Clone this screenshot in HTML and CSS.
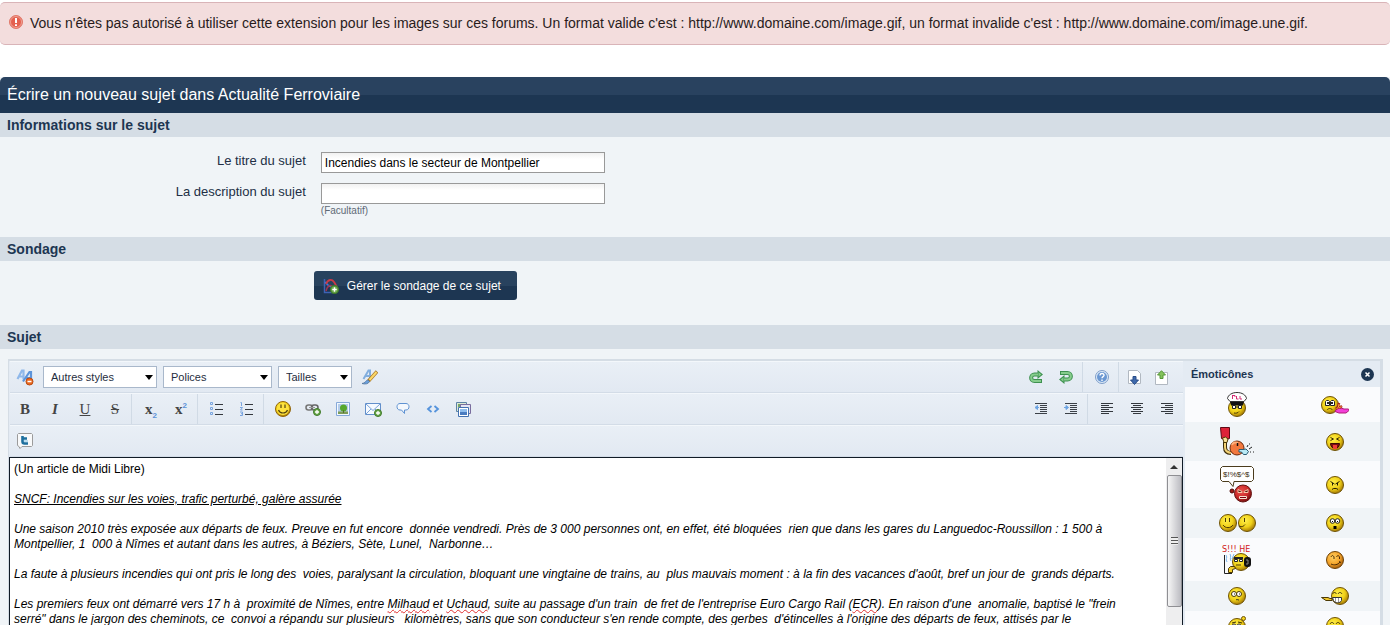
FILE: index.html
```html
<!DOCTYPE html>
<html lang="fr">
<head>
  <meta charset="utf-8">
  <title>Écrire un nouveau sujet dans Actualité Ferroviaire</title>
  <meta name="viewport" content="width=device-width, initial-scale=1">
  <link rel="stylesheet" href="styles.css">
</head>
<body>
  <!-- Shared shapes for icons and emoticons -->
  <svg class="defs" aria-hidden="true">
    <defs>
      <radialGradient id="gold" cx="40%" cy="35%" r="65%">
        <stop offset="0" stop-color="#fff04a"/>
        <stop offset=".6" stop-color="#f0d018"/>
        <stop offset="1" stop-color="#a87d05"/>
      </radialGradient>
      <radialGradient id="orange" cx="40%" cy="35%" r="65%">
        <stop offset="0" stop-color="#ffd060"/>
        <stop offset=".6" stop-color="#f5a52c"/>
        <stop offset="1" stop-color="#a85f0a"/>
      </radialGradient>
      <radialGradient id="red" cx="40%" cy="35%" r="65%">
        <stop offset="0" stop-color="#e8534d"/>
        <stop offset=".6" stop-color="#cf2c2c"/>
        <stop offset="1" stop-color="#7a1010"/>
      </radialGradient>
      <symbol id="face" viewBox="0 0 18 18">
        <circle cx="9" cy="9" r="8.5" fill="url(#gold)" stroke="#6e5206"/>
      </symbol>
      <symbol id="plus" viewBox="0 0 8 8">
        <circle cx="4" cy="4" r="3.5" fill="#6aa84b" stroke="#3f7a2a"/>
        <path d="M4 2v4M2 4h4" stroke="#fff" stroke-width="1.3"/>
      </symbol>
      <symbol id="turn" viewBox="0 0 14 14">
        <path d="M9 4.500H5.500C1 4.500 1 11 5.500 11H13" fill="none" stroke="#3e9150" stroke-width="4"/>
        <path d="M8.500 0L14 4.500 8.500 9z" fill="#3e9150"/>
        <path d="M9 4.500H5.500C1 4.500 1 11 5.500 11H12" fill="none" stroke="#86cc8c" stroke-width="2"/>
        <path d="M9.500 2.200l2.800 2.300-2.800 2.300z" fill="#86cc8c"/>
      </symbol>
    </defs>
  </svg>

  <div class="message">
    <svg width="14" height="14" viewBox="0 0 14 14" aria-hidden="true">
      <circle cx="7" cy="7" r="6.500" fill="#e4604f" stroke="#e07a6c"/>
      <circle cx="7" cy="7" r="5.500" fill="none" stroke="#f3b0a4" stroke-width=".8"/>
      <path d="M7 3v5M7 9.200v1.800" stroke="#fff" stroke-width="2"/>
    </svg>
    <p>Vous n'êtes pas autorisé à utiliser cette extension pour les images sur ces forums. Un format valide c'est : http://www.domaine.com/image.gif, un format invalide c'est : http://www.domaine.com/image.une.gif.</p>
  </div>

  <form class="post">
    <h1>Écrire un nouveau sujet dans Actualité Ferroviaire</h1>

    <h2>Informations sur le sujet</h2>
    <div class="fields">
      <label for="title">Le titre du sujet</label>
      <input type="text" id="title" value="Incendies dans le secteur de Montpellier">
      <label for="desc">La description du sujet</label>
      <div class="field">
        <input type="text" id="desc">
        <span class="hint">(Facultatif)</span>
      </div>
    </div>

    <h2>Sondage</h2>
    <div class="poll">
      <button type="button" class="poll-btn">
        <svg width="16" height="16" viewBox="0 0 16 16" fill="none" aria-hidden="true">
          <path d="M1.500 1v13.500H11" stroke="#3f62b4" stroke-width="1.500"/>
          <path d="M2 4l4 4 3 1" stroke="#3c78e0" stroke-width="1.500"/>
          <path d="M3 6c2-5 6-5 8-2s2 4 3 5" stroke="#c93a48" stroke-width="1.800"/>
          <path d="M3 13c1-5 4-7 7-4" stroke="#a03450" stroke-width="1.500"/>
          <use href="#plus" x="7" y="7" width="9" height="9"/>
        </svg>
        Gérer le sondage de ce sujet
      </button>
    </div>

    <h2>Sujet</h2>
    <div class="editor">
      <div class="main">
        <div class="toolbar">
          <div class="tools">
            <button type="button" class="tool" aria-label="Supprimer la mise en forme">
              <svg width="18" height="18" viewBox="0 0 18 18" fill="none" aria-hidden="true">
                <path d="M1.500 11L6 2.500h1.500v9M3.500 8.500h4" stroke="#8fb8ea" stroke-width="2.200"/>
                <path d="M7 13.500L13.500 4H15v9M9.500 10h5" stroke="#5c94da" stroke-width="2.200"/>
                <circle cx="13.500" cy="13.500" r="3.500" fill="#ec6a20" stroke="#b94a10"/>
                <path d="M11.500 13.500h4" stroke="#fff" stroke-width="1.500"/>
              </svg>
            </button>
            <span class="pick styles"><select aria-label="Autres styles"><option>Autres styles</option></select></span>
            <span class="pick fonts"><select aria-label="Polices"><option>Polices</option></select></span>
            <span class="pick sizes"><select aria-label="Tailles"><option>Tailles</option></select></span>
            <button type="button" class="tool" aria-label="Couleur du texte">
              <svg width="16" height="16" viewBox="0 0 16 16" fill="none" aria-hidden="true">
                <path d="M1.500 10L6.500 1.500H8V9M3.500 7h5" stroke="#82aede" stroke-width="2"/>
                <path d="M15 2.500L6.500 12" stroke="#a8782a" stroke-width="3.400"/>
                <path d="M14.500 3L7.500 11" stroke="#fbd767" stroke-width="2"/>
                <path d="M0 14.500c3 0 4-3.500 6-3.500l1.500 1.500C6.500 15 3 15.500 0 14.500z" fill="#6aa0dc" stroke="#54769d" stroke-width=".8"/>
              </svg>
            </button>
          </div>
          <div class="tools end">
            <button type="button" class="tool" aria-label="Annuler">
              <svg width="14" height="14" viewBox="0 0 14 14" aria-hidden="true"><use href="#turn" width="14" height="14"/></svg>
            </button>
            <button type="button" class="tool" aria-label="Rétablir">
              <svg width="14" height="14" viewBox="0 0 14 14" aria-hidden="true"><use href="#turn" width="14" height="14" transform="rotate(180 7 7)"/></svg>
            </button>
          </div>
          <div class="tools">
            <button type="button" class="tool" aria-label="Aide">
              <svg width="14" height="14" viewBox="0 0 14 14" fill="none" aria-hidden="true">
                <circle cx="7" cy="7" r="6.500" fill="#dce9f7" stroke="#7e9dc8"/>
                <circle cx="7" cy="7" r="5" fill="#6a97d2"/>
                <path d="M5 5.500c0-3 4.300-2.500 4 0C8.800 6.700 7 6.500 7 8.300M7 9.500V11" stroke="#fff" stroke-width="1.400"/>
              </svg>
            </button>
          </div>
          <div class="tools narrow">
            <button type="button" class="tool" aria-label="Agrandir">
              <svg width="13" height="15" viewBox="0 0 13 15" aria-hidden="true">
                <path d="M.5.500h9l3 3v10H.5z" fill="#fff" stroke="#b1b8c1"/>
                <path d="M5 6.500h3V10h2.500L6.500 14.500 2.500 10H5z" fill="#3e69ac" stroke="#294d88"/>
              </svg>
            </button>
            <button type="button" class="tool" aria-label="Réduire">
              <svg width="13" height="15" viewBox="0 0 13 15" aria-hidden="true">
                <path d="M.5 2.500h12v12H.5z" fill="#fff" stroke="#b1b8c1"/>
                <path d="M5 8.500h3V5h2.500L6.500.7 2.500 5H5z" fill="#83c25b" stroke="#559737"/>
              </svg>
            </button>
          </div>
        </div>

        <div class="toolbar">
          <div class="tools letters">
            <button type="button" class="tool"><b>B</b></button>
            <button type="button" class="tool"><i>I</i></button>
            <button type="button" class="tool"><u>U</u></button>
            <button type="button" class="tool"><s>S</s></button>
          </div>
          <div class="tools letters">
            <button type="button" class="tool script">x<sub>2</sub></button>
            <button type="button" class="tool script">x<sup>2</sup></button>
          </div>
          <div class="tools">
            <button type="button" class="tool" aria-label="Liste à puces">
              <svg width="14" height="14" viewBox="0 0 14 14" fill="none" aria-hidden="true">
                <path d="M5 2.500h8M5 7.500h8M5 12.500h8" stroke="#34383e"/>
                <path d="M.5.500h2v2h-2zM.5 5.500h2v2h-2zM.5 10.500h2v2h-2z" stroke="#79a4df"/>
              </svg>
            </button>
            <button type="button" class="tool" aria-label="Liste numérotée">
              <svg width="14" height="14" viewBox="0 0 14 14" fill="none" aria-hidden="true">
                <path d="M5 2.500h8M5 7.500h8M5 12.500h8" stroke="#34383e"/>
                <path d="M.5.500h1V4M0 5.500h2.500L.5 8h2M0 10h2.500v3.500H0M1 11.700h1" stroke="#79a4df"/>
              </svg>
            </button>
          </div>
          <div class="tools">
            <button type="button" class="tool" aria-label="Émoticônes">
              <svg width="18" height="18" viewBox="0 0 18 18" fill="none" aria-hidden="true">
                <circle cx="9" cy="9" r="7.500" fill="url(#gold)" stroke="#93650a"/>
                <circle cx="9" cy="9" r="6" fill="#ffe23e"/>
                <path d="M7 4.500V8M11 4.500V8M4.500 10c1.500 4 7.500 4 9 0" stroke="#53430f" stroke-width="1.200"/>
              </svg>
            </button>
            <button type="button" class="tool" aria-label="Lien">
              <svg width="16" height="14" viewBox="0 0 16 14" fill="none" aria-hidden="true">
                <rect x="1" y="3" width="6.500" height="5" rx="2.500" stroke="#777" stroke-width="1.600"/>
                <rect x="6.500" y="3" width="6.500" height="5" rx="2.500" stroke="#666" stroke-width="1.600"/>
                <path d="M4 5.500h6" stroke="#999"/>
                <use href="#plus" x="8" y="6" width="8" height="8"/>
              </svg>
            </button>
            <button type="button" class="tool" aria-label="Image">
              <svg width="14" height="14" viewBox="0 0 14 14" aria-hidden="true">
                <path d="M.5.500h13v13H.5z" fill="#f3f8ff" stroke="#86a9d9"/>
                <path d="M2 2h10v10H2z" fill="#b5cdea"/>
                <path d="M2 9.500h10V12H2z" fill="#7d9b57"/>
                <circle cx="7.500" cy="6" r="3.500" fill="#57a82d"/>
                <path d="M7 8h1v3H7z" fill="#56702b"/>
              </svg>
            </button>
            <button type="button" class="tool" aria-label="E-mail">
              <svg width="17" height="15" viewBox="0 0 17 15" fill="none" aria-hidden="true">
                <path d="M.5 1.500h15v11H.5z" fill="#f6faff" stroke="#628fcb"/>
                <path d="M1 2l7 6.500L15 2M1 12l5-5M15 12l-5-5" stroke="#7ba4d8"/>
                <use href="#plus" x="9" y="7" width="8" height="8"/>
              </svg>
            </button>
            <button type="button" class="tool" aria-label="Citation">
              <svg width="14" height="14" viewBox="0 0 14 14" aria-hidden="true">
                <path d="M4 1.500h6c4 0 4 6.500 0 6.500H8.500v3.500L5.500 8H4C0 8 0 1.500 4 1.500z" fill="#f4f8fd" stroke="#5f92d2"/>
              </svg>
            </button>
            <button type="button" class="tool" aria-label="Code">
              <svg width="14" height="8" viewBox="0 0 14 8" fill="none" aria-hidden="true">
                <path d="M5.500 1L2 4l3.500 3M8.500 1L12 4 8.500 7" stroke="#5593dc" stroke-width="1.800"/>
              </svg>
            </button>
            <button type="button" class="tool" aria-label="Médias">
              <svg width="17" height="17" viewBox="0 0 17 17" aria-hidden="true">
                <path d="M1.500 1.500h10v9h-10z" fill="#dfead4" stroke="#5c83a6"/>
                <path d="M3 3h7v3H3z" fill="#78a66c"/>
                <path d="M5.500 3.500h10v9h-10z" fill="#e4e4f4" stroke="#796d9e"/>
                <path d="M3.500 6.500h10v9h-10z" fill="#fff" stroke="#4472b1"/>
                <path d="M5 8h7v6H5z" fill="#8fbdee"/>
                <path d="M5 11h7v3H5z" fill="#4a7cc0"/>
              </svg>
            </button>
          </div>
          <div class="tools end">
            <button type="button" class="tool" aria-label="Diminuer le retrait">
              <svg width="14" height="12" viewBox="0 0 14 12" fill="none" aria-hidden="true">
                <path d="M1 .5h12M6 2.500h7M6 4.500h7M6 6.500h7M6 8.500h7M1 10.500h12" stroke="#3c4148"/>
                <path d="M3.500 2.500L1 4.500l2.500 2zM3 4.500h2" fill="#6da4e3" stroke="#6da4e3"/>
              </svg>
            </button>
            <button type="button" class="tool" aria-label="Augmenter le retrait">
              <svg width="14" height="12" viewBox="0 0 14 12" fill="none" aria-hidden="true">
                <path d="M1 .5h12M6 2.500h7M6 4.500h7M6 6.500h7M6 8.500h7M1 10.500h12" stroke="#3c4148"/>
                <path d="M2 2.500l2.500 2-2.500 2zM0 4.500h3" fill="#6da4e3" stroke="#6da4e3"/>
              </svg>
            </button>
          </div>
          <div class="tools">
            <button type="button" class="tool" aria-label="Aligner à gauche">
              <svg width="12" height="12" viewBox="0 0 12 12" aria-hidden="true"><path d="M0 .5h12M0 2.500h8M0 4.500h12M0 6.500h8M0 8.500h12M0 10.500h8" stroke="#34383e"/></svg>
            </button>
            <button type="button" class="tool" aria-label="Centrer">
              <svg width="12" height="12" viewBox="0 0 12 12" aria-hidden="true"><path d="M0 .5h12M2 2.500h8M0 4.500h12M2 6.500h8M0 8.500h12M2 10.500h8" stroke="#34383e"/></svg>
            </button>
            <button type="button" class="tool" aria-label="Aligner à droite">
              <svg width="12" height="12" viewBox="0 0 12 12" aria-hidden="true"><path d="M0 .5h12M4 2.500h8M0 4.500h12M4 6.500h8M0 8.500h12M4 10.500h8" stroke="#34383e"/></svg>
            </button>
          </div>
        </div>

        <div class="toolbar">
          <div class="tools">
            <button type="button" class="tool" aria-label="Twitter">
              <svg width="16" height="16" viewBox="0 0 16 16" fill="none" aria-hidden="true">
                <path d="M1.500.500h13l1 1v11l-1 1H5L3 15.500l-1-2-1.500-1v-11z" fill="#f8f9fa" stroke="#9b9b9b"/>
                <path d="M5.500 3v5.500c0 1.500 1 2 2 2h3.500M5.500 5.500H10" stroke="#1d6f9e" stroke-width="2.600"/>
                <path d="M7 8h4" stroke="#7cc0e4"/>
              </svg>
            </button>
          </div>
        </div>

        <div class="body">
          <div class="text" contenteditable="true" spellcheck="false" role="textbox" aria-multiline="true" aria-label="Sujet">
            <p>(Un article de Midi Libre)</p>
            <p><i><u>SNCF: Incendies sur les voies, trafic perturbé, galère assurée</u></i></p>
            <p><i>Une saison 2010 très exposée aux départs de feux. Preuve en fut encore  donnée vendredi. Près de 3 000 personnes ont, en effet, été bloquées  rien que dans les gares du Languedoc-Roussillon : 1 500 à Montpellier, 1  000 à Nîmes et autant dans les autres, à Béziers, Sète, Lunel,  Narbonne…</i></p>
            <p><i>La faute à plusieurs incendies qui ont pris le long des  voies, paralysant la circulation, bloquant une vingtaine de trains, au  plus mauvais moment : à la fin des vacances d'août, bref un jour de  grands départs.</i></p>
            <p><i>Les premiers feux ont démarré vers 17 h à  proximité de Nîmes, entre <span class="typo">Milhaud</span> et <span class="typo">Uchaud</span>, suite au passage d'un train  de fret de l'entreprise Euro Cargo Rail (<span class="typo">ECR</span>). En raison d'une  anomalie, baptisé le "frein serré" dans le jargon des cheminots, ce  convoi a répandu sur plusieurs   kilomètres, sans que son conducteur s'en rende compte, des gerbes  d'étincelles à l'origine des départs de feux, attisés par le</i></p>
          </div>
          <div class="scroll" aria-hidden="true">
            <span class="up"></span>
            <span class="thumb"></span>
          </div>
        </div>
      </div>

      <div class="emos">
        <div class="emos-head">
          <h3>Émoticônes</h3>
          <button type="button" class="close" aria-label="Fermer">
            <svg width="13" height="13" viewBox="0 0 13 13" aria-hidden="true">
              <circle cx="6.500" cy="6.500" r="6.500" fill="#1d3652"/>
              <path d="M4.500 4.500l4 4M8.500 4.500l-4 4" stroke="#fff" stroke-width="1.500"/>
            </svg>
          </button>
        </div>
        <div class="emo-row">
          <button type="button" class="emo" aria-label="Contrôleur">
            <svg width="22" height="25" viewBox="0 0 22 25" fill="none" aria-hidden="true">
              <use href="#face" x="2" y="7" width="18" height="18"/>
              <path d="M4 9.500h14l-1 4H5z" fill="#111"/>
              <path d="M1.500 6.500C2 3 6 .5 11 .5s9 2.500 9.500 6L18 9.500H4z" fill="#fff" stroke="#333"/>
              <path d="M6.500 3v4M7 3.500h2v1.500M10.500 4v3h2M14 4v3h2" stroke="#d42b73"/>
              <path d="M6.500 13.500h3v3h-3zM12.500 13.500h3v3h-3z" fill="#fff" stroke="#222"/>
              <path d="M9 15h4" stroke="#222"/>
              <path d="M8 21c2 .5 4 0 5-1.500" stroke="#4b3904"/>
            </svg>
          </button>
          <button type="button" class="emo" aria-label="Mal de tête">
            <svg width="28" height="18" viewBox="0 0 28 18" fill="none" aria-hidden="true">
              <use href="#face" width="18" height="18"/>
              <path d="M4.500 5.500l1-1h2l1 1v4h-4zM9.500 5.500l1-1h2l1 1v4h-4z" fill="#fff" stroke="#222"/>
              <path d="M6 6h2v2H6zM10 6h2v2h-2z" fill="#222"/>
              <path d="M6 14c1.500-2 4-2 5.500 0" stroke="#4b3904"/>
              <path d="M14 15.500l2-3 4-.500 3 1h4.500l.5 1.500-3 2.500h-7z" fill="#f23fd8" stroke="#b01b77"/>
              <path d="M15 13l2-2 1-4M18 12l3-2" stroke="#a8231c" stroke-width="2.600"/>
              <path d="M15.500 13l2-2 .5-3M18 12l2.500-1.500" stroke="#ffb53b"/>
            </svg>
          </button>
        </div>
        <div class="emo-row">
          <button type="button" class="emo" aria-label="Carton rouge">
            <svg width="34" height="29" viewBox="0 0 34 29" fill="none" aria-hidden="true">
              <path d="M5 15v5c0 4 2 6 6 6" stroke="#3b2b08" stroke-width="4"/>
              <path d="M5 15v5c0 4 2 5 6 6" stroke="#f2d276" stroke-width="2"/>
              <circle cx="17" cy="21" r="7" fill="#f2783e" stroke="#6d2708"/>
              <path d="M12 18c1-3 4-3 6-2" stroke="#ffb07c" stroke-width="2"/>
              <path d="M17.500 16v3" stroke="#111" stroke-width="1.500"/>
              <path d="M.5.500h9v11l-4 1-4-1z" fill="#dd2338" stroke="#5e0914"/>
              <path d="M2.500 11l3-1 2.500 2-1 3.500H4z" fill="#fbe29a" stroke="#4b3904"/>
              <path d="M19 22.500h4l3-.5 2.500 2.500-2 3h-3l-2-2.500h-2.500z" fill="#b9eaf6" stroke="#295b72"/>
              <path d="M27 20l1-2M29 22l3-2M30 25h1M33 25h1M29 17h1" stroke="#222"/>
            </svg>
          </button>
          <button type="button" class="emo" aria-label="Rire">
            <svg width="18" height="18" viewBox="0 0 18 18" fill="none" aria-hidden="true">
              <use href="#face" width="18" height="18"/>
              <path d="M4.500 4.500l3 1.500-3 1.500M13.500 4.500l-3 1.500 3 1.500" stroke="#3b2d05"/>
              <path d="M4.500 10.500h9c0 3-2 5-4.500 5s-4.500-2-4.500-5z" fill="#7d1010" stroke="#3b0a06"/>
              <path d="M7 12h4v4H7z" fill="#ed3f36"/>
            </svg>
          </button>
        </div>
        <div class="emo-row">
          <button type="button" class="emo" aria-label="Jurons">
            <svg width="34" height="37" viewBox="0 0 34 37" fill="none" aria-hidden="true">
              <path d="M2.500.500h29l2 2v11l-2 2H14l-1 5-4-5H2.500l-2-2v-11z" fill="#fff" stroke="#4b3c1d"/>
              <text class="swear" x="3" y="11">$!%$^$</text>
              <circle cx="12" cy="25" r="2" fill="#9e1b17" stroke="#4d0908"/>
              <circle cx="23" cy="27.500" r="8.500" fill="url(#red)" stroke="#661312"/>
              <path d="M18 23.500l4 2v1h-4zM28 23.500l-4 2v1h4z" fill="#511" stroke="#f6c7a8"/>
              <path d="M19.500 30.500h7v2h-7z" fill="#701" stroke="#fbe2cf"/>
            </svg>
          </button>
          <button type="button" class="emo" aria-label="Fâché">
            <svg width="18" height="18" viewBox="0 0 18 18" fill="none" aria-hidden="true">
              <use href="#face" width="18" height="18"/>
              <path d="M4.500 5.500l4 2.500M13.500 5.500l-4 2.500M6.500 7v2.500M11.500 7v2.500M6 13.500c1-1.500 5-1.500 6 0" stroke="#221a03"/>
            </svg>
          </button>
        </div>
        <div class="emo-row">
          <button type="button" class="emo" aria-label="Bise">
            <svg width="37" height="18" viewBox="0 0 37 18" fill="none" aria-hidden="true">
              <use href="#face" width="18" height="18"/>
              <use href="#face" x="19" width="18" height="18"/>
              <path d="M6.500 4v4M10.500 4v4M4 11c2 3.500 8 3.500 10 0M25.500 4v4M20 12c3 1.500 5 0 6-1.500" stroke="#4b3904"/>
            </svg>
          </button>
          <button type="button" class="emo" aria-label="Surpris">
            <svg width="18" height="18" viewBox="0 0 18 18" aria-hidden="true">
              <use href="#face" width="18" height="18"/>
              <circle cx="6.500" cy="7" r="2.300" fill="#fff" stroke="#222"/>
              <circle cx="11.500" cy="7" r="2.300" fill="#fff" stroke="#222"/>
              <path d="M6 7h1v1H6zM11 7h1v1h-1zM7.500 12h3v3h-3z"/>
            </svg>
          </button>
        </div>
        <div class="emo-row">
          <button type="button" class="emo" aria-label="Au secours">
            <svg width="30" height="33" viewBox="0 0 30 33" fill="none" aria-hidden="true">
              <text class="help" x="0" y="9">S!!! HE</text>
              <path d="M4 12c2 3-1 4 1 7M8 11c2 3-1 4 1 7M12 11l-2 5" stroke="#7eb9ee"/>
              <path d="M2.500 12v18.500H10" stroke="#222"/>
              <use href="#face" x="10" y="10" width="18" height="18"/>
              <path d="M12 14h9v2h-9z" fill="#222"/>
              <path d="M12.500 16.500h3v2h-3zM17.500 16.500h3v2h-3z" fill="#fff" stroke="#222"/>
              <rect x="22" y="14" width="7" height="10" rx="3" fill="#111"/>
              <path d="M24 17h2v4h-2" stroke="#888"/>
              <path d="M6.500 29.500v-4l2-2h4l1 2-3 1v3z" fill="#f3ce2c" stroke="#4b3904"/>
              <path d="M14 22h5" stroke="#4b3904"/>
            </svg>
          </button>
          <button type="button" class="emo" aria-label="Rougir">
            <svg width="18" height="18" viewBox="0 0 18 18" fill="none" aria-hidden="true">
              <circle cx="9" cy="9" r="8.500" fill="url(#orange)" stroke="#6e4206"/>
              <path d="M5 6c1-2 2-2 3 0v2M10.500 6c1-2 2-2 3 0v2M5 13c3 1.500 7 1 9-2M13.500 10l1 2" stroke="#4b2b04"/>
            </svg>
          </button>
        </div>
        <div class="emo-row">
          <button type="button" class="emo" aria-label="Perplexe">
            <svg width="18" height="18" viewBox="0 0 18 18" fill="none" aria-hidden="true">
              <use href="#face" width="18" height="18"/>
              <circle cx="6" cy="7" r="2.500" fill="#fff" stroke="#4b3904"/>
              <circle cx="11" cy="7" r="2.500" fill="#fff" stroke="#4b3904"/>
              <path d="M6 7h1M11 7h1M8 13c1-1 2 0 3 0" stroke="#222"/>
            </svg>
          </button>
          <button type="button" class="emo" aria-label="Moqueur">
            <svg width="28" height="18" viewBox="0 0 28 18" fill="none" aria-hidden="true">
              <use href="#face" x="10" width="18" height="18"/>
              <path d="M.5 10.500H7l2 1h2v2H5z" fill="#f0c62a" stroke="#4b3904"/>
              <path d="M11.500 7c1-2 3-2 4 0M17 7c1-2 3-2 4 0" stroke="#3b2d05"/>
              <path d="M11.500 10.500h9v3c-1 3-7 3-8 0z" fill="#fff" stroke="#333"/>
              <path d="M14.500 11v4M17.500 11v4" stroke="#999"/>
            </svg>
          </button>
        </div>
        <div class="emo-row">
          <button type="button" class="emo" aria-label="Réflexion">
            <svg width="20" height="20" viewBox="0 0 20 20" fill="none" aria-hidden="true">
              <use href="#face" x="1" y="2" width="18" height="18"/>
              <circle cx="16.500" cy="2.500" r="2" fill="#f6d61c" stroke="#6e5206"/>
              <path d="M5 7l4-1M11 6l4 1" stroke="#3b2d05"/>
              <circle cx="7" cy="10" r="2" fill="#fff" stroke="#333"/>
              <circle cx="12" cy="10" r="2" fill="#fff" stroke="#333"/>
            </svg>
          </button>
          <button type="button" class="emo" aria-label="Content">
            <svg width="18" height="18" viewBox="0 0 18 18" fill="none" aria-hidden="true">
              <use href="#face" width="18" height="18"/>
              <path d="M4 7c1-2 3-2 4 0M10 7c1-2 3-2 4 0M5 11c2 3 6 3 8 0" stroke="#3b2d05"/>
            </svg>
          </button>
        </div>
      </div>
    </div>
  </form>
</body>
</html>
```

FILE: styles.css
```css
* { box-sizing: border-box; }
body { margin: 0; height: 100vh; padding-top: 2px; overflow: hidden; display: flex; flex-direction: column;
       font-family: "Liberation Sans", Arial, sans-serif; font-size: 13px; color: #1d3652; background: #fff; }
h1, h2, h3, p { margin: 0; }
button, input, select { font-family: inherit; }
svg { display: block; flex: none; }
.defs { position: absolute; width: 0; height: 0; }

.message { display: flex; gap: 7px; padding: 12px 9px; margin-bottom: 32px; background: #f3dddd;
           border: 1px solid #d9b4b8; border-left: 0; border-right: 0; border-radius: 5px; }
.message p { font-size: 14px; line-height: 17px; color: #281b1b; }

.post { flex: 1; min-height: 0; display: flex; flex-direction: column; background: #f0f4f7; }
h1 { padding: 0 7px; font-size: 16px; line-height: 36px; font-weight: normal; color: #fff;
     background: linear-gradient(#29425f 50%, #1d3652 50%); border-radius: 5px 5px 0 0; }
h2 { padding: 1px 7px 0; font-size: 14px; line-height: 23px; color: #1d3652; background: #d5dde5; }

/* Topic details */
.fields { display: grid; grid-template-columns: 22% 284px; gap: 10px 15px; padding: 15px 0 19px; }
.fields label { text-align: right; line-height: 18px; color: #222f45; }
.fields input { width: 284px; height: 21px; padding: 0 3px; font-size: 12px; color: #000; display: block;
                border: 1px solid #999; background: linear-gradient(#f1f1f1, #fff 6px); }
.hint { display: block; font-size: 10px; line-height: 14px; color: #606a76; }

.poll { padding: 10px 0 25px calc(22% + 8px); }
.poll-btn { display: flex; align-items: center; gap: 8px; height: 29px; padding: 0 16px 0 9px; font-size: 12px;
            color: #fff; background: linear-gradient(#28425e 50%, #1d3652 50%); border: 0; border-radius: 3px; }

/* Editor */
.editor { flex: 1; min-height: 0; display: flex; margin: 10px 7px 0 8px; background: #e4ebf3;
          border: solid #d5dde5; border-width: 2px 3px 0 1px; }
.main { flex: 1; min-width: 0; display: flex; flex-direction: column; }
.toolbar { display: flex; height: 32px; margin-left: 1px; border-top: 1px solid #f3f7fb; border-bottom: 1px solid #d3dce7;
           background: linear-gradient(#e9eff6, #e2e9f2); }
.tools { display: flex; align-items: center; padding: 0 1px 0 4px; border-right: 1px solid #d0dae5; }
.tools:first-child { padding-left: 0; }
.tools:last-child, .tools:has(+ .end) { border-right: 0; }
.tools.end { margin-left: auto; }
.tools.narrow { padding: 0 8px 0 2px; }
.tool { display: flex; align-items: center; justify-content: center; width: 30px; height: 30px; padding: 0;
        border: 0; background: none; color: #444; }
.narrow .tool { width: 27px; }
.letters .tool { font-family: "Liberation Serif", "Times New Roman", serif; font-size: 15px; }
.letters i { font-weight: bold; }
.letters .script { display: block; font-weight: bold; }
.script sub, .script sup { font: bold 8px "Liberation Sans", Arial, sans-serif; line-height: 0; color: #5b92d8; }

.pick { position: relative; height: 22px; margin: 0 3px; }
.pick select { width: 100%; height: 22px; padding: 0 7px; font-size: 11px; color: #1f2d40; appearance: none;
               background: #fff; border: 1px solid #a9b8cb; border-radius: 0; }
.pick::after { content: ""; position: absolute; right: 4px; top: 9px; border: 4px solid transparent;
               border-top: 5px solid #000; border-bottom: 0; pointer-events: none; }
.styles { width: 114px; }
.fonts { width: 109px; }
.sizes { width: 74px; }

.body { flex: 1; min-height: 0; display: flex; background: #fff; border: 1px solid #111b26; border-bottom: 0; }
.text { flex: 1; min-width: 0; overflow: hidden; padding: 4px 20px 4px 4px; display: flex; flex-direction: column;
        gap: 15px; font-size: 12px; line-height: 15px; color: #000; outline: 0; }
.text p { white-space: pre-wrap; flex: none; }
.typo { text-decoration: underline wavy #e03030 1px; }
.scroll { width: 16px; display: flex; flex-direction: column; align-items: center; background: #eeeeef; }
.up { margin: 7px 0 6px; border: 4px solid transparent; border-top: 0; border-bottom: 4px solid #333; }
.thumb { width: 15px; height: 132px; border: 1px solid #8f8f93; border-radius: 2px;
         background: repeating-linear-gradient(#555 0 1px, #eee 1px 3px) center / 7px 8px no-repeat,
                     linear-gradient(90deg, #f6f6f6, #d9d9dc 50%, #bcbcc2); }

/* Emoticon panel */
.emos { width: 197px; padding-left: 2px; overflow: hidden; }
.emos-head { display: flex; align-items: center; justify-content: space-between; height: 26px; padding: 0 6px; }
.emos-head h3 { font-size: 11px; }
.close { padding: 0; border: 0; background: none; }
.emo-row { display: grid; grid-template-columns: 98px 98px; min-height: 30px; padding: 5px 0 5px 3px; background: #fafbfd; }
.emo-row:nth-child(odd) { background: #f0f4f7; }
.emo { display: flex; align-items: center; justify-content: center; padding: 0; border: 0; background: none; }
.swear { font: 8px "Liberation Sans", Arial, sans-serif; fill: #3b2d10; }
.help { font: 8px "DejaVu Sans", Verdana, sans-serif; fill: #d01818; }
```
